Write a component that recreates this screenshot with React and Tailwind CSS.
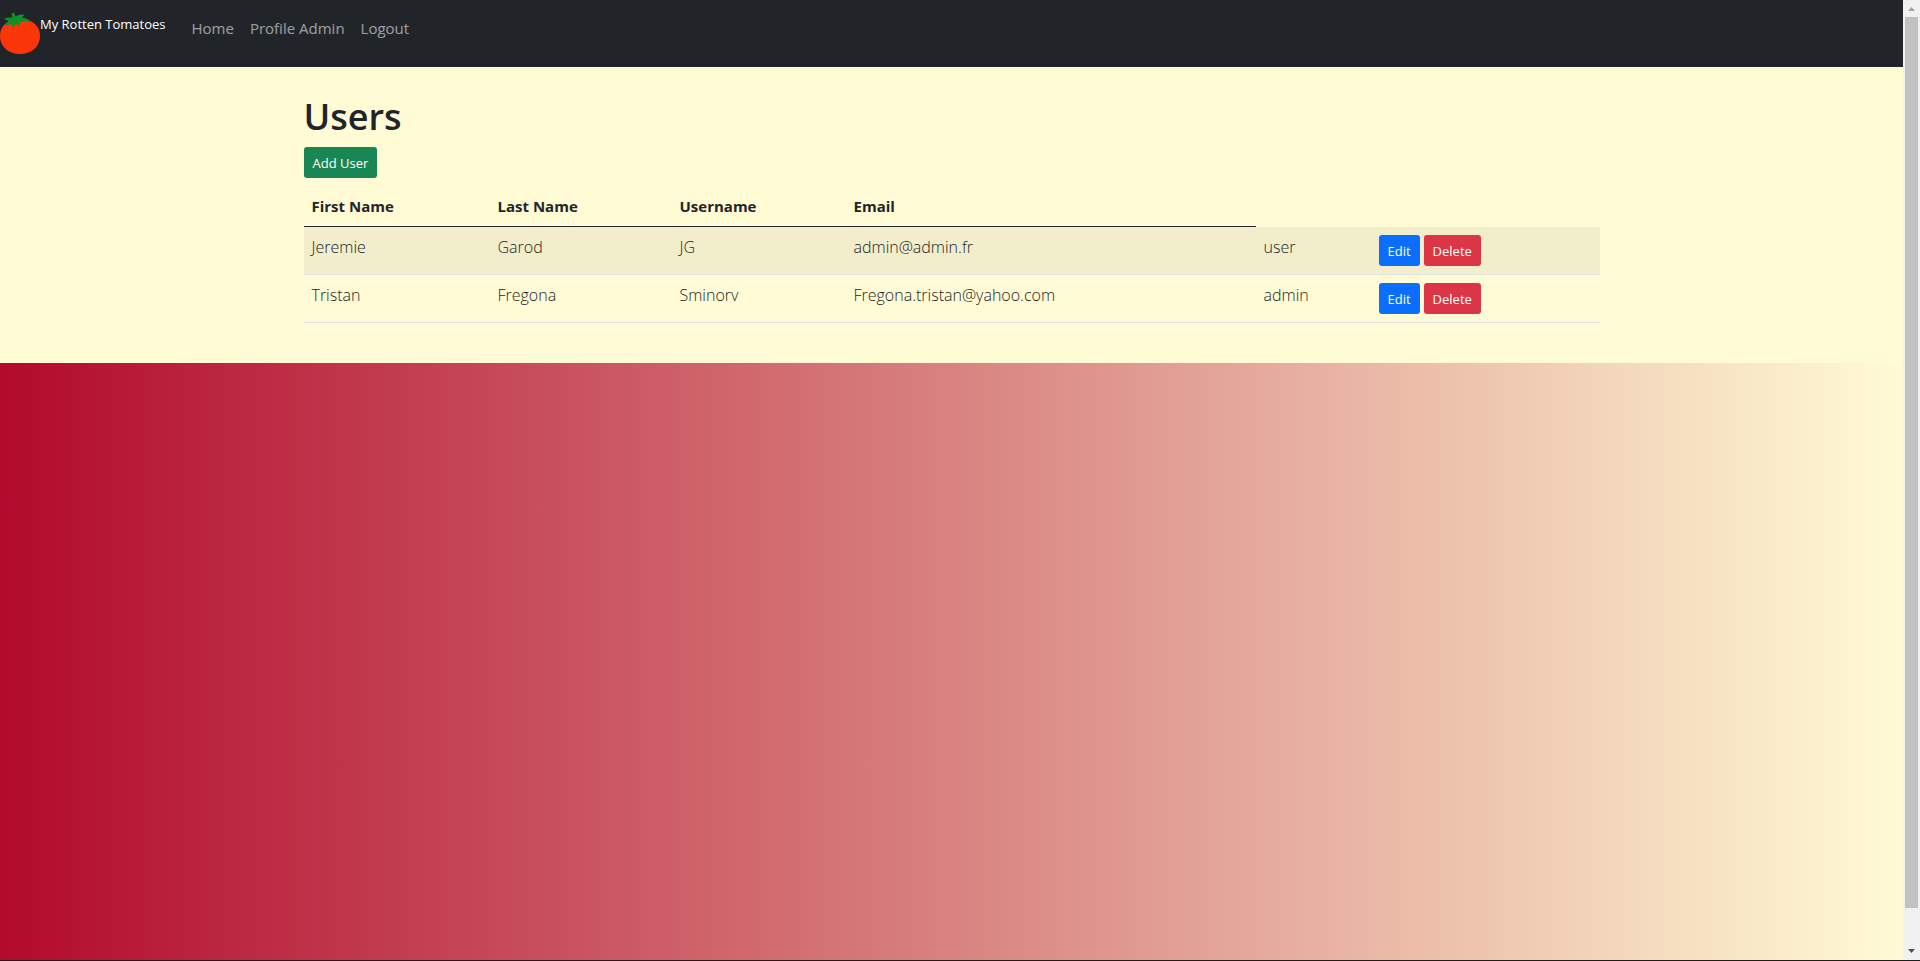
const users = [
  { first: 'Jeremie', last: 'Garod', username: 'JG', email: 'admin@admin.fr', role: 'user' },
  { first: 'Tristan', last: 'Fregona', username: 'Sminorv', email: 'Fregona.tristan@yahoo.com', role: 'admin' },
];

function Tomato() {
  return (
    <svg viewBox="0 0 40 42" className="h-[42px] w-10 shrink-0" aria-hidden="true">
      <path
        d="M20 8C26 7 32 8.500 36 13C39 16 40 20 40 24C40 35 31 42 20 42C9 42 0 35 0 24C0 20 1 16 4 13C8 8.500 14 7 20 8Z"
        fill="#fb3608"
      />
      <path
        d="M11.500 1.200L14 0.800L15.800 4.600C17 3.200 19 2.600 21 2.400L24.500 2.800L22 5.800C25.500 6 28.500 7.200 30.500 9.500C26.500 9 23 9.500 20 10.800L19 15L16.500 11.500L12.500 15.500L12 12L4 13.800L8.500 9L3.800 6.800L8 5.400L12.300 5.600Z"
        fill="#109028"
      />
    </svg>
  );
}

function NavLink({ children }) {
  return (
    <a href="#" className="px-2 text-[15px] leading-6 text-white/55 hover:text-white/75">
      {children}
    </a>
  );
}

function Navbar() {
  return (
    <nav className="flex h-[67px] items-start bg-[#212529] pt-3">
      <a href="#" className="mr-[18px] flex items-start text-[13px] leading-6 text-white">
        <Tomato />
        <span>My Rotten Tomatoes</span>
      </a>
      <div className="flex pt-1">
        <NavLink>Home</NavLink>
        <NavLink>Profile Admin</NavLink>
        <NavLink>Logout</NavLink>
      </div>
    </nav>
  );
}

function Button({ color, children }) {
  return (
    <button type="button" className={`h-[31px] rounded-[3px] px-[9px] text-[13px] leading-5 text-white ${color}`}>
      {children}
    </button>
  );
}

function UsersTable() {
  const head = 'border-b border-[#212529] px-2 text-[15px] font-bold';
  return (
    <table className="mt-2 w-full table-fixed border-separate border-spacing-0 text-left leading-6">
      <colgroup>
        <col className="w-[186px]" />
        <col className="w-[182px]" />
        <col className="w-[174px]" />
        <col className="w-[410px]" />
        <col className="w-[115px]" />
        <col className="w-[229px]" />
      </colgroup>
      <thead>
        <tr className="h-[41px]">
          <th scope="col" className={head}>First Name</th>
          <th scope="col" className={head}>Last Name</th>
          <th scope="col" className={head}>Username</th>
          <th scope="col" className={head}>Email</th>
        </tr>
      </thead>
      <tbody className="text-base font-light [&_td]:border-b [&_td]:border-[#dee2e6] [&_td]:p-2 [&_td]:align-top">
        {users.map((user) => (
          <tr key={user.username} className="odd:bg-[#f2edca]">
            <td>{user.first}</td>
            <td>{user.last}</td>
            <td>{user.username}</td>
            <td>{user.email}</td>
            <td>{user.role}</td>
            <td>
              <div className="flex gap-1 font-normal">
                <Button color="bg-[#0d6efd]">Edit</Button>
                <Button color="bg-[#dc3545]">Delete</Button>
              </div>
            </td>
          </tr>
        ))}
      </tbody>
    </table>
  );
}

function Scrollbar() {
  return (
    <div className="flex w-[17px] shrink-0 flex-col items-center bg-[#f1f1f1]" aria-hidden="true">
      <svg viewBox="0 0 17 17" className="h-[17px] w-[17px] shrink-0">
        <path d="M5 11L8.500 7L12 11Z" fill="#a3a3a3" />
      </svg>
      <div className="w-[13px] grow bg-[#c1c1c1]" />
      <div className="h-[35px] shrink-0" />
      <svg viewBox="0 0 17 17" className="h-[17px] w-[17px] shrink-0">
        <path d="M5 6L8.500 10L12 6Z" fill="#505050" />
      </svg>
    </div>
  );
}

export default function App() {
  return (
    <div className="flex min-h-screen border-b border-[#1d1d1d] font-['Open_Sans','Noto_Sans',sans-serif] text-[#212529]">
      <div className="min-w-0 flex-1 bg-linear-to-r/srgb from-[#b20a2c] to-[#fffbd5]">
        <Navbar />
        <main className="bg-[#fffbd5] pt-[26px] pb-10">
          <div className="mx-auto max-w-[1320px] px-3">
            <h1 className="mb-1.5 text-[36px] leading-[48px] font-semibold">Users</h1>
            <Button color="bg-[#198754]">Add User</Button>
            <UsersTable />
          </div>
        </main>
      </div>
      <Scrollbar />
    </div>
  );
}
